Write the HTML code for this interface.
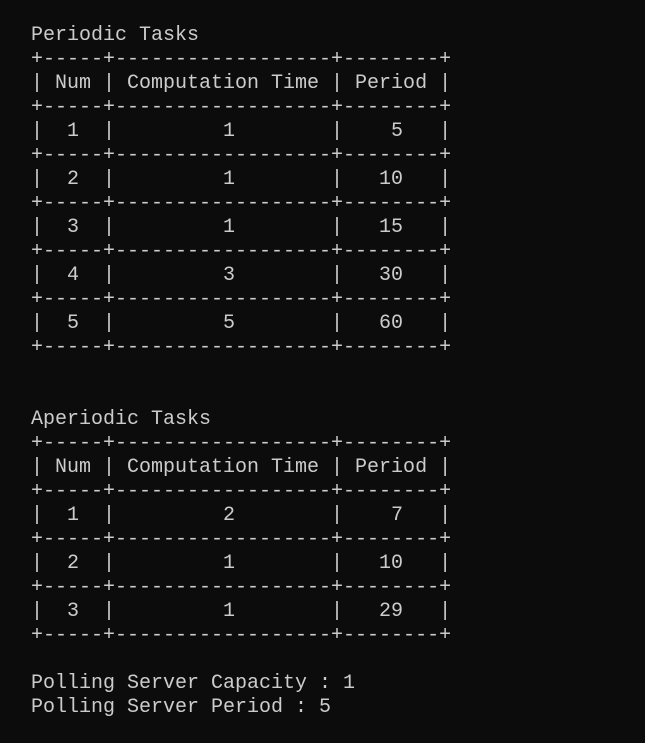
<!DOCTYPE html>
<html><head><meta charset="utf-8"><style>
html,body{margin:0;padding:0;background:#0c0c0c;width:645px;height:743px;overflow:hidden}
pre{position:absolute;left:31px;top:24px;margin:0;font-family:"Liberation Mono",monospace;font-size:20px;line-height:24px;color:#cccccc;letter-spacing:0}
</style></head><body><pre>Periodic Tasks
+-----+------------------+--------+
| Num | Computation Time | Period |
+-----+------------------+--------+
|  1  |         1        |    5   |
+-----+------------------+--------+
|  2  |         1        |   10   |
+-----+------------------+--------+
|  3  |         1        |   15   |
+-----+------------------+--------+
|  4  |         3        |   30   |
+-----+------------------+--------+
|  5  |         5        |   60   |
+-----+------------------+--------+


Aperiodic Tasks
+-----+------------------+--------+
| Num | Computation Time | Period |
+-----+------------------+--------+
|  1  |         2        |    7   |
+-----+------------------+--------+
|  2  |         1        |   10   |
+-----+------------------+--------+
|  3  |         1        |   29   |
+-----+------------------+--------+

Polling Server Capacity : 1
Polling Server Period : 5</pre></body></html>
